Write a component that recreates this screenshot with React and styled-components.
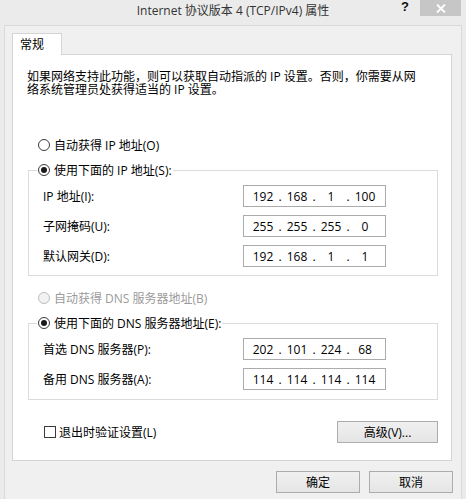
import React from 'react';
import styled, { createGlobalStyle } from 'styled-components';

const GlobalStyle = createGlobalStyle`
	html, body {
		margin: 0;
		padding: 0;
		background: #f0f0f0;
	}
	body {
		font-family: "Open Sans", "Noto Sans CJK SC", sans-serif;
		font-size: 12px;
		color: #000;
	}
`;

const StyledWindow = styled.div`
	width: 466px;
	height: 499px;
	display: flex;
	flex-direction: column;
	background: #ebebeb;
	overflow: hidden;
`;
const StyledTitleBar = styled.div`
	height: 25px;
	flex-shrink: 0;
	display: grid;
	grid-template-columns: 1fr auto 1fr;
	align-items: start;
`;
const StyledTitle = styled.div`
	grid-column: 2;
	line-height: 22px;
	color: #333;
	white-space: nowrap;
`;
const StyledControls = styled.div`
	grid-column: 3;
	justify-self: end;
	display: flex;
	align-items: flex-start;
	margin-right: 5px;
`;
const StyledHelp = styled.span`
	font-family: "Liberation Sans", sans-serif;
	font-weight: bold;
	font-size: 13px;
	line-height: 13px;
	margin-right: 11px;
	color: #111;
`;
const StyledClose = styled.div`
	width: 41px;
	height: 16px;
	background: #c6c6c6;
	display: flex;
	align-items: center;
	justify-content: center;
`;
const StyledClient = styled.div`
	flex: 1;
	margin: 0 4px;
	border: 1px solid #dadada;
	border-bottom: none;
	padding: 7px 9px 0 7px;
	background: #f0f0f0;
	display: flex;
	flex-direction: column;
`;
const StyledTab = styled.div`
	width: 50px;
	height: 22px;
	box-sizing: border-box;
	border: 1px solid #d4d4d4;
	border-bottom: none;
	background: #fff;
	padding-left: 7px;
	line-height: 21px;
	margin-bottom: -1px;
	position: relative;
	z-index: 1;
`;
const StyledPanel = styled.div`
	height: 407px;
	box-sizing: border-box;
	border: 1px solid #d4d4d4;
	background: #fff;
	padding: 15px 0 0 15px;
`;
const StyledDescription = styled.p`
	margin: 0 0 0 -1px;
	line-height: 13px;
	white-space: nowrap;
`;
const StyledRadioRow = styled.div`
	display: flex;
	align-items: center;
	gap: 4px;
	height: 20px;
	padding-left: ${p => p.$inset ? '10px' : '0'};
	margin-top: ${p => p.$top || 0}px;
	color: ${p => p.$disabled ? '#9b9b9b' : '#000'};
	white-space: nowrap;
`;
const StyledRadio = styled.span`
	width: 12px;
	height: 12px;
	box-sizing: border-box;
	border-radius: 50%;
	border: 1px solid ${p => p.$disabled ? '#bdbdbd' : '#3a3a3a'};
	background: ${p => p.$disabled ? '#f2f2f2' : '#fff'};
	display: flex;
	align-items: center;
	justify-content: center;
	flex-shrink: 0;

	&::after {
		content: '';
		width: 6px;
		height: 6px;
		border-radius: 50%;
		background: #1a1a1a;
		display: ${p => p.$checked ? 'block' : 'none'};
	}
`;
const StyledGroup = styled.fieldset`
	width: 410px;
	box-sizing: border-box;
	margin: 5px 0 0 0;
	padding: 5px 0 ${p => p.$bottom}px 14px;
	border: 1px solid #dcdcdc;
	min-inline-size: auto;
`;
const StyledLegend = styled.legend`
	padding: 0 1px 0 1px;
	margin-left: -6px;
`;
const StyledFieldRow = styled.div`
	display: grid;
	grid-template-columns: 200px 143px;
	align-items: center;
	height: 22px;

	& + & {
		margin-top: 8px;
	}
`;
const StyledIpBox = styled.div`
	height: 22px;
	box-sizing: border-box;
	border: 1px solid #ababab;
	background: #fff;
	display: flex;
	align-items: center;
	padding-left: 4px;
`;
const StyledOctet = styled.span`
	width: 30px;
	text-align: center;
`;
const StyledDot = styled.span`
	width: 4px;
	text-align: center;
`;
const StyledBottomRow = styled.div`
	width: 410px;
	height: 22px;
	margin-top: 21px;
	display: flex;
	align-items: center;
	justify-content: space-between;
`;
const StyledCheckRow = styled.div`
	display: flex;
	align-items: center;
	gap: 3px;
	padding-left: 16px;
`;
const StyledCheckbox = styled.span`
	width: 12px;
	height: 12px;
	box-sizing: border-box;
	border: 1px solid #3a3a3a;
	background: #fff;
`;
const StyledButton = styled.button`
	width: ${p => p.$w}px;
	height: 22px;
	box-sizing: border-box;
	border: 1px solid #acacac;
	background: linear-gradient(#f0f0f0, #e5e5e5);
	font-family: inherit;
	font-size: 12px;
	color: #000;
	padding: 0;
`;
const StyledFooter = styled.div`
	display: flex;
	justify-content: flex-end;
	gap: 9px;
	margin: 10px -1px 0 0;
`;

const ipRows = [
	{ label: 'IP 地址(I):', value: ['192', '168', '1', '100'] },
	{ label: '子网掩码(U):', value: ['255', '255', '255', '0'] },
	{ label: '默认网关(D):', value: ['192', '168', '1', '1'] },
];
const dnsRows = [
	{ label: '首选 DNS 服务器(P):', value: ['202', '101', '224', '68'] },
	{ label: '备用 DNS 服务器(A):', value: ['114', '114', '114', '114'] },
];

const IpBox = ({ value }) => (
	<StyledIpBox>
		{value.map((part, i) => (
			<React.Fragment key={i}>
				{i > 0 && <StyledDot>.</StyledDot>}
				<StyledOctet>{part}</StyledOctet>
			</React.Fragment>
		))}
	</StyledIpBox>
);

const Rows = ({ rows }) => rows.map(row => (
	<StyledFieldRow key={row.label}>
		<span>{row.label}</span>
		<IpBox value={row.value} />
	</StyledFieldRow>
));

export default function App() {
	return (
		<>
			<GlobalStyle />
			<StyledWindow>
				<StyledTitleBar>
					<StyledTitle>Internet 协议版本 4 (TCP/IPv4) 属性</StyledTitle>
					<StyledControls>
						<StyledHelp>?</StyledHelp>
						<StyledClose>
							<svg width="10" height="9" viewBox="0 0 10 9">
								<path d="M1 0.5 L9 8.5 M9 0.5 L1 8.5" stroke="#fff" strokeWidth="1.8" />
							</svg>
						</StyledClose>
					</StyledControls>
				</StyledTitleBar>
				<StyledClient>
					<StyledTab>常规</StyledTab>
					<StyledPanel>
						<StyledDescription>
							如果网络支持此功能，则可以获取自动指派的 IP 设置。否则，你需要从网<br />
							络系统管理员处获得适当的 IP 设置。
						</StyledDescription>

						<StyledRadioRow $inset $top={39}>
							<StyledRadio />
							自动获得 IP 地址(O)
						</StyledRadioRow>
						<StyledGroup $bottom={8}>
							<StyledLegend>
								<StyledRadioRow>
									<StyledRadio $checked />
									使用下面的 IP 地址(S):
								</StyledRadioRow>
							</StyledLegend>
							<Rows rows={ipRows} />
						</StyledGroup>

						<StyledRadioRow $inset $top={12} $disabled>
							<StyledRadio $disabled />
							自动获得 DNS 服务器地址(B)
						</StyledRadioRow>
						<StyledGroup $bottom={9}>
							<StyledLegend>
								<StyledRadioRow>
									<StyledRadio $checked />
									使用下面的 DNS 服务器地址(E):
								</StyledRadioRow>
							</StyledLegend>
							<Rows rows={dnsRows} />
						</StyledGroup>

						<StyledBottomRow>
							<StyledCheckRow>
								<StyledCheckbox />
								退出时验证设置(L)
							</StyledCheckRow>
							<StyledButton $w={101}>高级(V)...</StyledButton>
						</StyledBottomRow>
					</StyledPanel>
					<StyledFooter>
						<StyledButton $w={84}>确定</StyledButton>
						<StyledButton $w={84}>取消</StyledButton>
					</StyledFooter>
				</StyledClient>
			</StyledWindow>
		</>
	);
}
